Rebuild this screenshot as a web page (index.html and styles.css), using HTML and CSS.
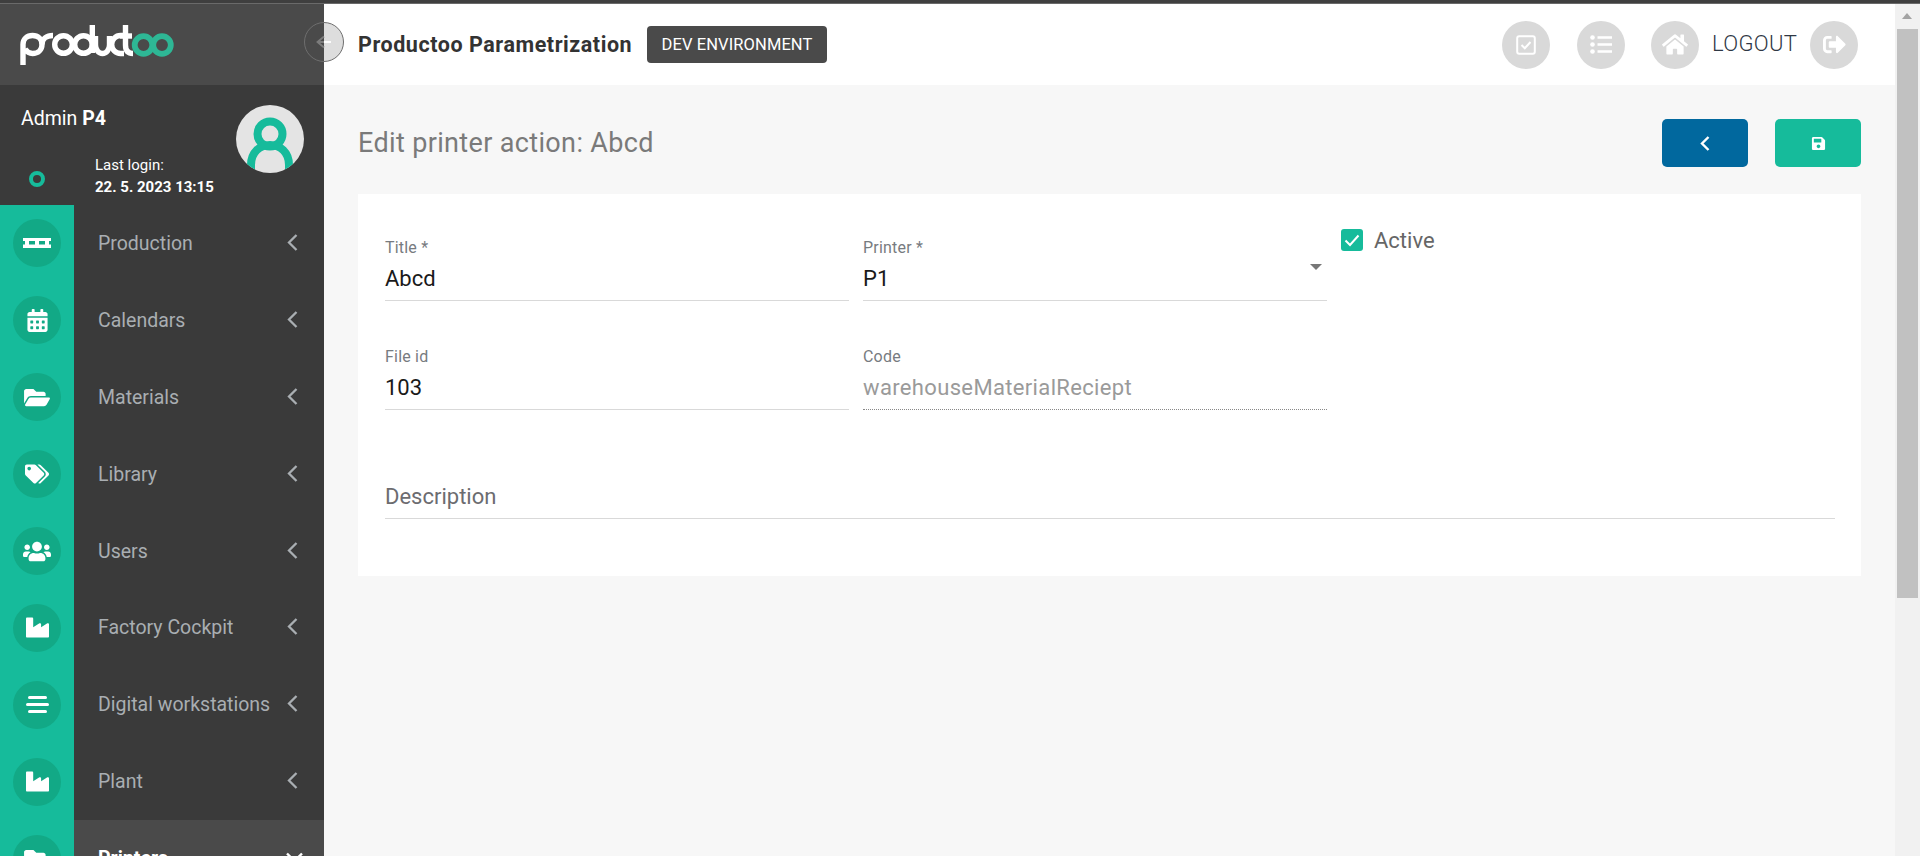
FILE: index.html
```html
<!DOCTYPE html>
<html lang="en">
<head>
<meta charset="utf-8">
<title>Productoo Parametrization</title>
<link rel="stylesheet" href="styles.css">
</head>
<body>
<div class="topstrip"></div>
<div class="app">
  <aside class="sidebar">
    <div class="logo-block">
      <svg class="logo" viewBox="0 0 156 42" width="156" height="42" aria-label="productoo">
        <g fill="none" stroke="#fff" stroke-width="5.4" stroke-linecap="butt">
          <path d="M3 41V20.500C3 15 7 11.500 12.500 11.500S22 15 22 20.500S18 29.500 12.500 29.500C9.500 29.500 7 28 5 25"/>
          <path d="M22 20.500C22 15 26.500 11.500 33 11.500"/>
          <circle cx="43.500" cy="20.500" r="8.800"/>
          <circle cx="63.500" cy="20.500" r="8.800"/>
          <path d="M72.300 1V29"/>
          <path d="M75.500 12V21A7 8.500 0 0 0 89.500 21V12"/>
          <path d="M104 11.500H100.500A8.800 9 0 0 0 100.500 29.500H104"/>
          <path d="M105.500 1V21C105.500 26.500 108 29.500 113 29.500"/>
          <path d="M100 12H112"/>
        </g>
        <g fill="none" stroke="#2eb795" stroke-width="5.800">
          <circle cx="123.500" cy="21" r="8.800"/>
          <circle cx="142" cy="21" r="8.800"/>
        </g>
      </svg>
    </div>
    <div class="user-block">
      <div class="user-text">
        <div class="user-name">Admin <b>P4</b></div>
        <div class="user-login">
          <span class="status-ring"></span>
          <div class="login-text">
            <div>Last login:</div>
            <div class="login-date">22. 5. 2023 13:15</div>
          </div>
        </div>
      </div>
      <svg class="avatar" viewBox="0 0 68 68" width="68" height="68">
        <defs><clipPath id="avatar-clip"><circle cx="34" cy="34" r="34"/></clipPath></defs>
        <circle cx="34" cy="34" r="34" fill="#e4e4e4"/>
        <g clip-path="url(#avatar-clip)" fill="none" stroke="#16bb9b" stroke-width="8">
          <circle cx="34" cy="29" r="12.500"/>
          <path d="M15 68V60C15 47 24 40 34 40S53 47 53 60V68"/>
        </g>
      </svg>
    </div>
    <nav class="nav">
      <a class="nav-item">
        <span class="rail"><span class="rail-dot">
          <svg class="ic" width="28" height="10" viewBox="0 0 28 10"><path fill="#fff" d="M0 0h28v3H0zM0 6.500h28V10H0zM2 2h4v6H2zM12 2h4v6h-4zM22 2h4v6h-4z"/></svg>
        </span></span>
        <span class="nav-body"><span class="nav-label">Production</span><svg class="chev" width="11" height="17" viewBox="0 0 11 17"><path d="M9.500 1L2 8.500L9.500 16" fill="none" stroke="currentColor" stroke-width="2.300"/></svg></span>
      </a>
      <a class="nav-item">
        <span class="rail"><span class="rail-dot">
          <svg class="ic" width="21" height="23" viewBox="0 0 448 512"><path fill="#fff" d="M0 464c0 26.500 21.500 48 48 48h352c26.500 0 48-21.500 48-48V192H0v272zm320-196c0-6.600 5.400-12 12-12h40c6.600 0 12 5.400 12 12v40c0 6.600-5.400 12-12 12h-40c-6.600 0-12-5.400-12-12v-40zm0 128c0-6.600 5.400-12 12-12h40c6.600 0 12 5.400 12 12v40c0 6.600-5.400 12-12 12h-40c-6.600 0-12-5.400-12-12v-40zM192 268c0-6.600 5.400-12 12-12h40c6.600 0 12 5.400 12 12v40c0 6.600-5.400 12-12 12h-40c-6.600 0-12-5.400-12-12v-40zm0 128c0-6.600 5.400-12 12-12h40c6.600 0 12 5.400 12 12v40c0 6.600-5.400 12-12 12h-40c-6.600 0-12-5.400-12-12v-40zM64 268c0-6.600 5.400-12 12-12h40c6.600 0 12 5.400 12 12v40c0 6.600-5.400 12-12 12H76c-6.600 0-12-5.400-12-12v-40zm0 128c0-6.600 5.400-12 12-12h40c6.600 0 12 5.400 12 12v40c0 6.600-5.400 12-12 12H76c-6.600 0-12-5.400-12-12v-40zM400 64h-48V16c0-8.800-7.200-16-16-16h-32c-8.800 0-16 7.200-16 16v48H160V16c0-8.800-7.200-16-16-16h-32c-8.800 0-16 7.200-16 16v48H48C21.500 64 0 85.500 0 112v48h448v-48c0-26.500-21.500-48-48-48z"/></svg>
        </span></span>
        <span class="nav-body"><span class="nav-label">Calendars</span><svg class="chev" width="11" height="17" viewBox="0 0 11 17"><path d="M9.500 1L2 8.500L9.500 16" fill="none" stroke="currentColor" stroke-width="2.300"/></svg></span>
      </a>
      <a class="nav-item">
        <span class="rail"><span class="rail-dot">
          <svg class="ic" width="26" height="23" viewBox="0 0 576 512"><path fill="#fff" d="M572.694 292.093L500.270 416.248A63.997 63.997 0 0 1 444.989 448H45.025c-18.523 0-30.064-20.093-20.731-36.093l72.424-124.155A64 64 0 0 1 152 256h399.964c18.523 0 30.064 20.093 20.730 36.093zM152 224h328v-48c0-26.510-21.490-48-48-48H272l-64-64H48C21.490 64 0 85.490 0 112v278.046l69.077-118.418C86.214 242.250 117.989 224 152 224z"/></svg>
        </span></span>
        <span class="nav-body"><span class="nav-label">Materials</span><svg class="chev" width="11" height="17" viewBox="0 0 11 17"><path d="M9.500 1L2 8.500L9.500 16" fill="none" stroke="currentColor" stroke-width="2.300"/></svg></span>
      </a>
      <a class="nav-item">
        <span class="rail"><span class="rail-dot">
          <svg class="ic" width="24" height="20" viewBox="0 0 640 512"><path fill="#fff" d="M497.941 225.941L286.059 14.059A48 48 0 0 0 252.118 0H48C21.490 0 0 21.490 0 48v204.118a48 48 0 0 0 14.059 33.941l211.882 211.882c18.744 18.745 49.136 18.746 67.882 0l204.118-204.118c18.745-18.745 18.745-49.137 0-67.882zM112 160c-26.510 0-48-21.490-48-48s21.490-48 48-48 48 21.490 48 48-21.490 48-48 48zm513.941 133.823L421.823 497.941c-18.745 18.745-49.137 18.745-67.882 0l-.36-.36L527.640 323.522c16.999-16.999 26.360-39.600 26.360-63.640s-9.362-46.641-26.360-63.640L331.397 0h48.721a48 48 0 0 1 33.941 14.059l211.882 211.882c18.745 18.745 18.745 49.137 0 67.882z"/></svg>
        </span></span>
        <span class="nav-body"><span class="nav-label">Library</span><svg class="chev" width="11" height="17" viewBox="0 0 11 17"><path d="M9.500 1L2 8.500L9.500 16" fill="none" stroke="currentColor" stroke-width="2.300"/></svg></span>
      </a>
      <a class="nav-item">
        <span class="rail"><span class="rail-dot">
          <svg class="ic" width="28" height="23" viewBox="0 0 640 512"><path fill="#fff" d="M96 224c35.300 0 64-28.700 64-64s-28.700-64-64-64-64 28.700-64 64 28.700 64 64 64zm448 0c35.300 0 64-28.700 64-64s-28.700-64-64-64-64 28.700-64 64 28.700 64 64 64zm32 32h-64c-17.600 0-33.500 7.100-45.100 18.600 40.300 22.100 68.900 62 75.100 109.400h66c17.700 0 32-14.300 32-32v-32c0-35.300-28.700-64-64-64zm-256 0c61.900 0 112-50.100 112-112S381.900 32 320 32 208 82.100 208 144s50.100 112 112 112zm76.800 32h-8.300c-20.800 10-43.900 16-68.500 16s-47.600-6-68.500-16h-8.300C179.600 288 128 339.600 128 403.200V432c0 26.500 21.500 48 48 48h288c26.500 0 48-21.500 48-48v-28.800c0-63.600-51.600-115.200-115.200-115.200zm-223.700-13.400C161.500 263.100 145.600 256 128 256H64c-35.300 0-64 28.700-64 64v32c0 17.700 14.300 32 32 32h65.900c6.300-47.400 34.900-87.300 75.200-109.400z"/></svg>
        </span></span>
        <span class="nav-body"><span class="nav-label">Users</span><svg class="chev" width="11" height="17" viewBox="0 0 11 17"><path d="M9.500 1L2 8.500L9.500 16" fill="none" stroke="currentColor" stroke-width="2.300"/></svg></span>
      </a>
      <a class="nav-item">
        <span class="rail"><span class="rail-dot">
          <svg class="ic" width="23" height="23" viewBox="0 0 512 512"><path fill="#fff" d="M475.115 163.781L336 252.309v-68.280c0-18.916-20.931-30.399-36.885-20.248L160 252.309V56c0-13.255-10.745-24-24-24H24C10.745 32 0 42.745 0 56v400c0 13.255 10.745 24 24 24h464c13.255 0 24-10.745 24-24V184.029c0-18.917-20.931-30.399-36.885-20.248z"/></svg>
        </span></span>
        <span class="nav-body"><span class="nav-label">Factory Cockpit</span><svg class="chev" width="11" height="17" viewBox="0 0 11 17"><path d="M9.500 1L2 8.500L9.500 16" fill="none" stroke="currentColor" stroke-width="2.300"/></svg></span>
      </a>
      <a class="nav-item">
        <span class="rail"><span class="rail-dot">
          <svg class="ic" width="23" height="17" viewBox="0 0 23 17"><path fill="#fff" d="M3.500 0h16a1.500 1.500 0 0 1 0 3h-16a1.500 1.500 0 0 1 0-3zM1.500 7h20a1.500 1.500 0 0 1 0 3h-20a1.500 1.500 0 0 1 0-3zM3.500 14h16a1.500 1.500 0 0 1 0 3h-16a1.500 1.500 0 0 1 0-3z"/></svg>
        </span></span>
        <span class="nav-body"><span class="nav-label">Digital workstations</span><svg class="chev" width="11" height="17" viewBox="0 0 11 17"><path d="M9.500 1L2 8.500L9.500 16" fill="none" stroke="currentColor" stroke-width="2.300"/></svg></span>
      </a>
      <a class="nav-item">
        <span class="rail"><span class="rail-dot">
          <svg class="ic" width="23" height="23" viewBox="0 0 512 512"><path fill="#fff" d="M475.115 163.781L336 252.309v-68.280c0-18.916-20.931-30.399-36.885-20.248L160 252.309V56c0-13.255-10.745-24-24-24H24C10.745 32 0 42.745 0 56v400c0 13.255 10.745 24 24 24h464c13.255 0 24-10.745 24-24V184.029c0-18.917-20.931-30.399-36.885-20.248z"/></svg>
        </span></span>
        <span class="nav-body"><span class="nav-label">Plant</span><svg class="chev" width="11" height="17" viewBox="0 0 11 17"><path d="M9.500 1L2 8.500L9.500 16" fill="none" stroke="currentColor" stroke-width="2.300"/></svg></span>
      </a>
      <a class="nav-item nav-active">
        <span class="rail"><span class="rail-dot">
          <svg class="ic" width="26" height="23" viewBox="0 0 576 512"><path fill="#fff" d="M572.694 292.093L500.270 416.248A63.997 63.997 0 0 1 444.989 448H45.025c-18.523 0-30.064-20.093-20.731-36.093l72.424-124.155A64 64 0 0 1 152 256h399.964c18.523 0 30.064 20.093 20.730 36.093zM152 224h328v-48c0-26.510-21.490-48-48-48H272l-64-64H48C21.490 64 0 85.490 0 112v278.046l69.077-118.418C86.214 242.250 117.989 224 152 224z"/></svg>
        </span></span>
        <span class="nav-body"><span class="nav-label">Printers</span><svg class="chev chev-down" width="17" height="11" viewBox="0 0 17 11"><path d="M1 1.500L8.500 9L16 1.500" fill="none" stroke="currentColor" stroke-width="2.400"/></svg></span>
      </a>
    </nav>
  </aside>

  <main class="main">
    <header class="header">
      <button class="collapse" aria-label="Collapse">
        <svg width="16" height="14" viewBox="0 0 16 14"><path d="M8 1.500L1.500 7L8 12.500M1.500 7H8" fill="none" stroke="#7c7c7c" stroke-width="1.800"/><path d="M8 7H15" fill="none" stroke="#fff" stroke-width="1.800"/></svg>
      </button>
      <div class="app-title">Productoo Parametrization</div>
      <div class="env-badge">DEV ENVIRONMENT</div>
      <div class="header-tools">
        <span class="tool tool-first">
          <svg width="20" height="20" viewBox="0 0 20 20"><rect x="1.200" y="1.200" width="17.600" height="17.600" rx="2" fill="none" stroke="#fff" stroke-width="2"/><path d="M5.500 10L8.800 13.200L14.500 7" fill="none" stroke="#fff" stroke-width="2"/></svg>
        </span>
        <span class="tool tool-list">
          <svg width="22" height="19" viewBox="0 0 22 19"><circle cx="2.500" cy="2.500" r="2.300" fill="#fff"/><circle cx="2.500" cy="9.500" r="2.300" fill="#fff"/><circle cx="2.500" cy="16.500" r="2.300" fill="#fff"/><path d="M7.500 2.500H22M7.500 9.500H22M7.500 16.500H22" stroke="#fff" stroke-width="2.400"/></svg>
        </span>
        <span class="tool tool-home">
          <svg width="26" height="23" viewBox="0 0 576 512"><path fill="#fff" d="M280.370 148.260L96 300.110V464a16 16 0 0 0 16 16l112.060-.29a16 16 0 0 0 15.920-16V368a16 16 0 0 1 16-16h64a16 16 0 0 1 16 16v95.640a16 16 0 0 0 16 16.050L464 480a16 16 0 0 0 16-16V300L295.670 148.260a12.190 12.190 0 0 0-15.300 0zM571.600 251.470L488 182.560V44.050a12 12 0 0 0-12-12h-56a12 12 0 0 0-12 12v72.610L318.470 43a48 48 0 0 0-61 0L4.340 251.470a12 12 0 0 0-1.600 16.900l25.500 31A12 12 0 0 0 45.150 301l235.220-193.740a12.190 12.190 0 0 1 15.300 0L530.900 301a12 12 0 0 0 16.900-1.600l25.500-31a12 12 0 0 0-1.700-16.930z"/></svg>
        </span>
        <span class="logout-text">LOGOUT</span>
        <span class="tool tool-logout">
          <svg width="23" height="23" viewBox="0 0 512 512"><path fill="#fff" d="M497 273L329 441c-15 15-41 4.500-41-17v-96H152c-13.300 0-24-10.700-24-24v-96c0-13.300 10.700-24 24-24h136V88c0-21.400 25.900-32 41-17l168 168c9.300 9.400 9.300 24.600 0 34zM192 436v-40c0-6.600-5.400-12-12-12H96c-17.700 0-32-14.300-32-32V160c0-17.700 14.300-32 32-32h84c6.600 0 12-5.400 12-12V76c0-6.600-5.400-12-12-12H96c-53 0-96 43-96 96v192c0 53 43 96 96 96h84c6.600 0 12-5.400 12-12z"/></svg>
        </span>
      </div>
    </header>

    <section class="content">
      <div class="page-head">
        <h1 class="page-title">Edit printer action: Abcd</h1>
        <div class="page-actions">
          <button class="btn btn-back" aria-label="Back"><svg width="10" height="15" viewBox="0 0 10 15"><path d="M8.500 1L2 7.500L8.500 14" fill="none" stroke="#fff" stroke-width="2.400"/></svg></button>
          <button class="btn btn-save" aria-label="Save"><svg width="15" height="15" viewBox="0 0 448 512"><path fill="#fff" d="M433.941 129.941l-83.882-83.882A48 48 0 0 0 316.118 32H48C21.490 32 0 53.490 0 80v352c0 26.510 21.490 48 48 48h352c26.510 0 48-21.490 48-48V163.882a48 48 0 0 0-14.059-33.941zM224 416c-35.346 0-64-28.654-64-64 0-35.346 28.654-64 64-64s64 28.654 64 64c0 35.346-28.654 64-64 64zm96-304.520V212c0 6.627-5.373 12-12 12H76c-6.627 0-12-5.373-12-12V108c0-6.627 5.373-12 12-12h228.520c3.183 0 6.235 1.264 8.485 3.515l3.480 3.480A11.996 11.996 0 0 1 320 111.480z"/></svg></button>
        </div>
      </div>

      <form class="card">
        <div class="field field-r1">
          <label class="f-label">Title *</label>
          <div class="f-value">Abcd</div>
        </div>
        <div class="field field-r1">
          <label class="f-label">Printer *</label>
          <div class="f-value f-select">P1<span class="caret"></span></div>
        </div>
        <label class="check">
          <span class="check-box"><svg width="16" height="13" viewBox="0 0 16 13"><path d="M1.500 6.500L6 11L14.500 1.500" fill="none" stroke="#fff" stroke-width="2"/></svg></span>
          <span class="check-text">Active</span>
        </label>
        <div class="field">
          <label class="f-label">File id</label>
          <div class="f-value">103</div>
        </div>
        <div class="field">
          <label class="f-label">Code</label>
          <div class="f-value f-disabled">warehouseMaterialReciept</div>
        </div>
        <div class="grid-spacer"></div>
        <div class="field field-wide">
          <label class="f-label"></label>
          <div class="f-value f-placeholder">Description</div>
        </div>
      </form>
    </section>
  </main>

  <div class="scrollbar">
    <span class="sb-arrow"></span>
    <span class="sb-thumb"></span>
  </div>
</div>
</body>
</html>
```

FILE: styles.css
```css
* { box-sizing: border-box; }
html, body { margin: 0; height: 100%; overflow: hidden; }
body {
  font-family: Roboto, "Liberation Sans", sans-serif;
  background: #f7f7f7;
  color: #333;
  display: flex;
  flex-direction: column;
}
.topstrip { height: 4px; flex: none; background: #3f3f3f; border-bottom: 1px solid #6a6a6a; }
.app { flex: 1; min-height: 0; display: flex; }

/* sidebar */
.sidebar { width: 324px; flex: none; background: #3a3a3a; display: flex; flex-direction: column; overflow: hidden; }
.logo-block { height: 81px; flex: none; background: #4a4a4a; padding: 20px 0 0 20px; }
.logo { display: block; }
.user-block { height: 120px; flex: none; display: flex; justify-content: space-between; padding: 22px 20px 0 21px; color: #fff; }
.user-name { font-size: 19.500px; line-height: 24px; }
.user-name b { font-weight: 700; }
.user-login { display: flex; align-items: center; margin-top: 23px; }
.status-ring { width: 16px; height: 16px; border: 4px solid #16bb9b; border-radius: 50%; margin-left: 8px; margin-top: 5px; }
.login-text { margin-left: 50px; font-size: 15px; line-height: 22px; white-space: nowrap; }
.login-date { font-weight: 700; }
.avatar { margin-top: -2px; }

.nav { display: flex; flex-direction: column; }
.nav-item { height: 76.900px; flex: none; display: flex; color: #a9aeb2; }
.rail { width: 74px; flex: none; background: #16bb9b; display: flex; align-items: center; justify-content: center; }
.rail-dot { width: 48px; height: 48px; border-radius: 50%; background: #12a986; display: flex; align-items: center; justify-content: center; }
.nav-body { flex: 1; display: flex; align-items: center; padding: 0 26px 0 24px; justify-content: space-between; }
.nav-label { font-size: 19.500px; white-space: nowrap; }
.chev { margin-bottom: 2px; }
.nav-active .nav-body { background: #4a4a4a; color: #fff; padding-right: 21px; }
.nav-active .nav-label { font-weight: 700; }

/* main */
.main { flex: 1; min-width: 0; display: flex; flex-direction: column; }
.header { height: 81px; flex: none; background: #fff; display: flex; align-items: center; padding: 0 37px 0 34px; position: relative; }
.collapse {
  position: absolute; left: -20px; top: 18px;
  width: 40px; height: 40px; padding: 0;
  border-radius: 50%;
  border: 1px solid #6e6e6e;
  background: linear-gradient(90deg, transparent 50%, #ddd 50%);
  display: flex; align-items: center; justify-content: center;
}
.app-title { width: 274px; font-size: 21.500px; letter-spacing: .55px; font-weight: 700; color: #333; white-space: nowrap; }
.env-badge { margin-left: 15px; height: 37px; width: 180px; background: #4a4a4a; border-radius: 4px; color: #fff; font-size: 16.500px; letter-spacing: .1px; display: flex; align-items: center; justify-content: center; white-space: nowrap; }
.header-tools { margin-left: auto; display: flex; align-items: center; }
.tool { width: 48px; height: 48px; border-radius: 50%; background: #d9d9d9; display: flex; align-items: center; justify-content: center; flex: none; }
.tool-list { margin-left: 27px; }
.tool-home { margin-left: 26px; }
.logout-text { margin-left: 13px; width: 84px; font-size: 22px; font-weight: 300; letter-spacing: .3px; color: #2f3845; margin-top: -3px; white-space: nowrap; }
.tool-logout { margin-left: 14px; }

.content { flex: 1; padding: 34px 34px 0; min-height: 0; }
.page-head { display: flex; justify-content: space-between; align-items: center; height: 48px; margin-bottom: 27px; }
.page-title { margin: 0; font-size: 27px; letter-spacing: .35px; font-weight: 400; color: #7a7a7a; white-space: nowrap; }
.page-actions { display: flex; gap: 27px; }
.btn { width: 86px; height: 48px; border: 0; border-radius: 5px; padding: 0; display: flex; align-items: center; justify-content: center; }
.btn-back { background: #01689e; }
.btn-save { background: #16bb9b; }

.card {
  background: #fff;
  padding: 35px 26px 57px 27px;
  display: grid;
  grid-template-columns: 464px 464px 1fr;
  column-gap: 14px;
  row-gap: 45px;
  align-items: start;
}
.field { height: 64px; display: flex; flex-direction: column; }
.field-r1 { height: 72px; padding-top: 8px; }
.field-wide { grid-column: 1 / -1; }
.f-label { height: 20px; padding-top: 2px; font-size: 16px; letter-spacing: .2px; line-height: 18px; color: #777b80; }
.f-value {
  flex: 1;
  min-height: 0;
  font-size: 22px;
  line-height: 44px;
  color: #1a1a1a;
  border-bottom: 1px solid #d9d9d9;
  position: relative;
  white-space: nowrap;
}
.f-disabled { color: #9a9a9a; letter-spacing: .35px; border-bottom: 1px dotted #888; }
.f-placeholder { font-size: 22px; color: #6c6c70; }
.caret { position: absolute; right: 5px; top: 7px; width: 0; height: 0; border-left: 6px solid transparent; border-right: 6px solid transparent; border-top: 6px solid #777; }
.check { display: flex; align-items: center; height: 22px; }
.check-box { width: 22px; height: 22px; border-radius: 3px; background: #16bb9b; display: flex; align-items: center; justify-content: center; flex: none; }
.check-text { margin-left: 11px; font-size: 22px; color: #666; }

/* scrollbar */
.scrollbar { width: 25px; flex: none; background: #f1f1f1; padding: 0 2px; display: flex; flex-direction: column; align-items: stretch; }
.sb-arrow { height: 25px; flex: none; position: relative; }
.sb-arrow::before { content: ""; position: absolute; left: 5px; top: 9px; width: 0; height: 0; border-left: 5.500px solid transparent; border-right: 5.500px solid transparent; border-bottom: 6px solid #a3a3a3; }
.sb-thumb { height: 569px; flex: none; background: #c1c1c1; }
```
